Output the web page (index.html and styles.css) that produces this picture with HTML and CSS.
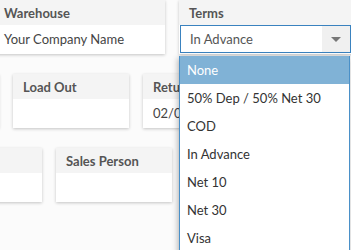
FILE: index.html
```html
<!DOCTYPE html>
<html lang="en">
<head>
<meta charset="UTF-8">
<title>Order Details</title>
<link rel="stylesheet" href="styles.css">
</head>
<body>
<div class="board">
    <div class="row row-top">
        <div class="card card-wide">
            <div class="card-head">Warehouse</div>
            <div class="card-body">Your Company Name</div>
        </div>
        <div class="card card-wide terms">
            <div class="card-head">Terms</div>
            <div class="select">
                <span class="select-value">In Advance</span>
                <span class="select-arrow"></span>
            </div>
        </div>
    </div>

    <div class="row row-mid">
        <div class="card">
            <div class="card-head">Load In</div>
            <div class="card-body"></div>
        </div>
        <div class="card">
            <div class="card-head">Load Out</div>
            <div class="card-body"></div>
        </div>
        <div class="card">
            <div class="card-head">Return Date</div>
            <div class="card-body">02/07/2024</div>
        </div>
    </div>

    <div class="row row-low">
        <div class="card">
            <div class="card-head">Client</div>
            <div class="card-body"></div>
        </div>
        <div class="card">
            <div class="card-head">Sales Person</div>
            <div class="card-body"></div>
        </div>
    </div>

    <ul class="options">
        <li class="active">None</li>
        <li>50% Dep / 50% Net 30</li>
        <li>COD</li>
        <li>In Advance</li>
        <li>Net 10</li>
        <li>Net 30</li>
        <li>Visa</li>
    </ul>
</div>
</body>
</html>
```

FILE: styles.css
```css
body {
    margin: 0;
    font-family: Lato, "Open Sans", sans-serif;
    font-size: 13px;
    color: #444;
    background: #fbfbfb;
    overflow: hidden;
}
.board {
    position: relative;
    height: 250px;
}
.row {
    display: flex;
    gap: 14px;
    margin-bottom: 20px;
}
.row-top {
    margin-left: -6px;
}
.row-mid {
    margin-left: -117px;
}
.row-low {
    margin-left: -74px;
}
.card {
    flex: 0 0 116px;
    width: 116px;
    min-width: 0;
    height: 54px;
    background: #fff;
    box-shadow: 0 1px 3px rgba(0, 0, 0, 0.22);
}
.card-wide {
    flex-basis: 171px;
    width: 171px;
}
.terms {
    flex-basis: 180px;
    width: 180px;
}
.card-head {
    height: 25px;
    line-height: 26px;
    padding: 0 10px;
    background: #f4f4f4;
    font-weight: bold;
    color: #555;
    white-space: nowrap;
    overflow: hidden;
}
.card-body {
    height: 29px;
    line-height: 29px;
    padding: 0 10px;
    white-space: nowrap;
    overflow: hidden;
}
.select {
    display: flex;
    margin: 0 0 0 1px;
    width: 171px;
    height: 28px;
    box-sizing: border-box;
    border: 1px solid #3a82bf;
    background: #fff;
}
.select-value {
    flex: 1;
    line-height: 26px;
    padding-left: 9px;
    color: #555;
}
.select-arrow {
    width: 28px;
    background: #f0f0f0;
    position: relative;
}
.select-arrow::after {
    content: "";
    position: absolute;
    left: 9px;
    top: 11px;
    border-left: 5px solid transparent;
    border-right: 5px solid transparent;
    border-top: 5px solid #777;
}
.options {
    position: absolute;
    top: 56px;
    left: 179px;
    width: 171px;
    margin: 0;
    padding: 0;
    list-style: none;
    box-sizing: border-box;
    border: 1px solid #4a90c8;
    border-top: 0;
    background: #fff;
    box-shadow: -1px 2px 6px rgba(0, 0, 0, 0.3);
}
.options li {
    height: 28px;
    line-height: 28px;
    padding-left: 7px;
    color: #333;
}
.options li.active {
    background: #80b2d6;
    color: #fff;
}
```
